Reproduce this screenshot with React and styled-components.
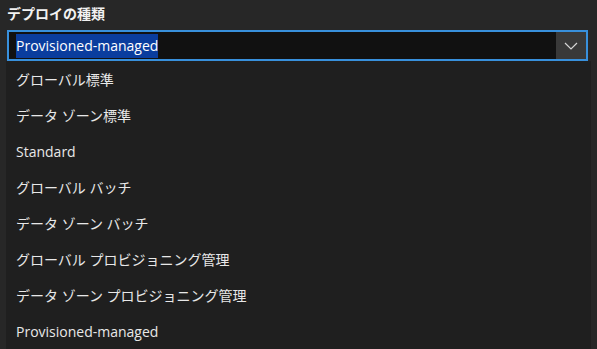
import styled, { createGlobalStyle } from 'styled-components';

const GlobalStyle = createGlobalStyle`
  body {
    margin: 0;
    background-color: #272727;
    font-family: "Open Sans", "Noto Sans CJK JP", sans-serif;
    color: #ececec;
  }
`;

const Panel = styled.div`
  display: flex;
  flex-direction: column;
  width: 585px;
  height: 349px;
  padding-left: 6px;
  overflow: hidden;
`;

const Label = styled.div`
  font-size: 14px;
  font-weight: 700;
  line-height: 20px;
  padding: 4px 0 6px 1px;
  color: #f2f2f2;
`;

const Select = styled.div`
  display: flex;
  margin-left: 1px;
  width: 581px;
  height: 33px;
  box-sizing: border-box;
  border: 2px solid #3890dc;
  background-color: #111111;
`;

const Value = styled.div`
  flex: 1;
  display: flex;
  align-items: center;
  padding-left: 7px;
`;

const Selected = styled.span`
  font-size: 14px;
  line-height: 24px;
  background-color: #0a3d9e;
  color: #ffffff;
`;

const Chevron = styled.div`
  display: flex;
  align-items: center;
  justify-content: center;
  width: 30px;
  background-color: #393939;
`;

const List = styled.ul`
  list-style: none;
  margin: 0;
  padding: 0;
  flex: 1;
  background-color: #1f1f1f;
`;

const Option = styled.li`
  display: flex;
  align-items: center;
  height: 36px;
  padding-left: 10px;
  font-size: 14px;
  color: #e8e8e8;
`;

const options = [
  'グローバル標準',
  'データ ゾーン標準',
  'Standard',
  'グローバル バッチ',
  'データ ゾーン バッチ',
  'グローバル プロビジョニング管理',
  'データ ゾーン プロビジョニング管理',
  'Provisioned-managed',
];

const App = () => {
  return (
    <>
      <GlobalStyle />
      <Panel>
        <Label>デプロイの種類</Label>
        <Select>
          <Value>
            <Selected>Provisioned-managed</Selected>
          </Value>
          <Chevron>
            <svg width="14" height="8" viewBox="0 0 14 8">
              <path d="M1 1l6 6 6-6" fill="none" stroke="#d6d6d6" strokeWidth="1.2" />
            </svg>
          </Chevron>
        </Select>
        <List>
          {options.map((o) => (
            <Option key={o}>{o}</Option>
          ))}
        </List>
      </Panel>
    </>
  );
};

export default App;
